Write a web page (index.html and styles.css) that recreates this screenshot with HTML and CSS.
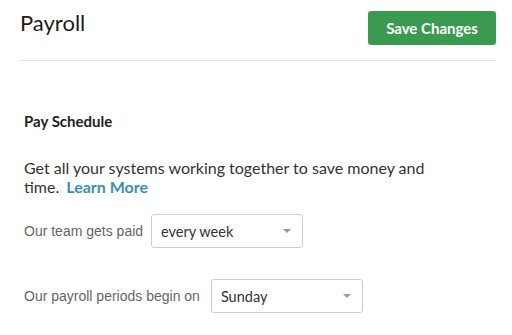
FILE: index.html
```html
<!DOCTYPE html>
<html>
<head>
<meta charset="utf-8">
<link rel="stylesheet" href="styles.css">
</head>
<body>
<div class="page">
  <header class="header">
    <h1 class="title">Payroll</h1>
    <button class="save">Save Changes</button>
  </header>
  <section class="content">
    <h2 class="section-title">Pay Schedule</h2>
    <p class="desc">Get all your systems working together to save money and time.<a class="learn" href="#">Learn More</a></p>
    <div class="row row-first">
      <span class="label">Our team gets paid</span>
      <div class="select"><span>every week</span><span class="caret"></span></div>
    </div>
    <div class="row row-second">
      <span class="label">Our payroll periods begin on</span>
      <div class="select"><span>Sunday</span><span class="caret"></span></div>
    </div>
  </section>
</div>
</body>
</html>
```
FILE: styles.css
```css
html, body { margin: 0; padding: 0; background: #fff; }
body { font-family: Lato, "Liberation Sans", sans-serif; color: #222; }
.page { padding: 0 16px 0 20px; }
.header {
  display: flex; justify-content: space-between; align-items: flex-start;
  padding-top: 11px; height: 49px; border-bottom: 1px solid #e6e6e6;
}
.title { margin: 0; font-size: 22px; font-weight: 400; line-height: 24px; padding-top: 0; color: #1c1c1c; }
.save {
  width: 128px; height: 34px; border: 0; border-radius: 3px;
  background: #3a9a50; color: #fff; font-family: inherit;
  font-size: 15px; font-weight: 700; padding: 0;
}
.content { padding-left: 4px; }
.section-title { margin: 51px 0 0; font-size: 15px; font-weight: 700; line-height: 18px; color: #222; }
.desc { margin: 28px 0 0; font-size: 16px; line-height: 19px; color: #333; width: 420px; }
.learn { color: #3a8fb7; font-weight: 700; text-decoration: none; margin-left: 7px; }
.row { display: flex; align-items: center; }
.row-first { margin-top: 18px; gap: 8px; }
.row-second { margin-top: 31px; gap: 11px; }
.label { font-family: "Liberation Sans", Arial, sans-serif; font-size: 14px; color: #666; }
.select {
  box-sizing: border-box; width: 152px; height: 34px;
  border: 1px solid #cfcfcf; border-radius: 3px;
  display: flex; align-items: center; justify-content: space-between;
  padding: 0 11px 0 9px; font-size: 14.5px; color: #333;
}
.caret { width: 0; height: 0; border-left: 4px solid transparent; border-right: 4px solid transparent; border-top: 4px solid #999; }
```
